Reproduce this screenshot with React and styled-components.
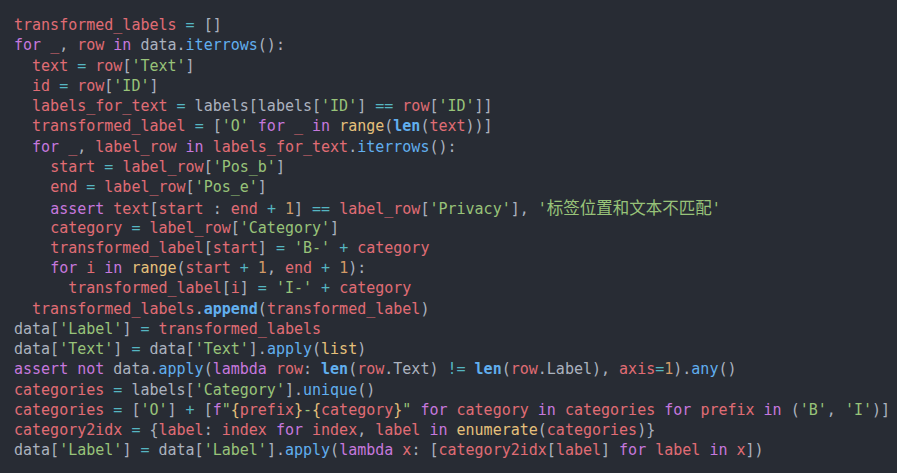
import styled, { createGlobalStyle } from 'styled-components'

const colors = {
  v: '#e06c75',
  k: '#c678dd',
  s: '#98c379',
  f: '#61afef',
  b: '#61afef',
  y: '#e5c07b',
  o: '#56b6c2',
  n: '#d19a66',
  p: '#abb2bf'
}

const source = [
  '«v transformed_labels» «o =» []',
  '«k for» «v _», «v row» «k in» data.«f iterrows»():',
  '  «v text» «o =» «v row»[«s \'Text\'»]',
  '  «v id» «o =» «v row»[«s \'ID\'»]',
  '  «v labels_for_text» «o =» labels[labels[«s \'ID\'»] «o ==» «v row»[«s \'ID\'»]]',
  '  «v transformed_label» «o =» [«s \'O\'» «k for» «v _» «k in» «y range»(«b len»(«v text»))]',
  '  «k for» «v _», «v label_row» «k in» «v labels_for_text».«f iterrows»():',
  '    «v start» «o =» «v label_row»[«s \'Pos_b\'»]',
  '    «v end» «o =» «v label_row»[«s \'Pos_e\'»]',
  '    «k assert» «v text»[«v start» : «v end» «o +» «n 1»] «o ==» «v label_row»[«s \'Privacy\'»], «s \'»«c 标签位置和文本不匹配»«s \'»',
  '    «v category» «o =» «v label_row»[«s \'Category\'»]',
  '    «v transformed_label»[«v start»] «o =» «s \'B-\'» «o +» «v category»',
  '    «k for» «v i» «k in» «y range»(«v start» «o +» «n 1», «v end» «o +» «n 1»):',
  '      «v transformed_label»[«v i»] «o =» «s \'I-\'» «o +» «v category»',
  '  «v transformed_labels».«b append»(«v transformed_label»)',
  'data[«s \'Label\'»] «o =» «v transformed_labels»',
  'data[«s \'Text\'»] «o =» data[«s \'Text\'»].«f apply»(«y list»)',
  '«k assert» «k not» data.«f apply»(«k lambda» «v row»: «b len»(«v row».Text) «o !=» «b len»(«v row».Label), «v axis»«o =»«n 1»).«f any»()',
  '«v categories» «o =» labels[«s \'Category\'»].«f unique»()',
  '«v categories» «o =» [«s \'O\'»] «o +» [«k f»«s "»«y {»«v prefix»«y }»«s -»«y {»«v category»«y }»«s "» «k for» «v category» «k in» «v categories» «k for» «v prefix» «k in» («s \'B\'», «s \'I\'»)]',
  '«v category2idx» «o =» {«v label»: «v index» «k for» «v index», «v label» «k in» «y enumerate»(«v categories»)}',
  'data[«s \'Label\'»] «o =» data[«s \'Label\'»].«f apply»(«k lambda» «v x»: [«v category2idx»[«v label»] «k for» «v label» «k in» «v x»])'
]

// split a marked line into [kind, text] tokens
const tokenize = line => {
  const out = []
  const re = /«(\w) ([^»]*)»/g
  let last = 0
  let m
  while ((m = re.exec(line))) {
    if (m.index > last) out.push(['p', line.slice(last, m.index)])
    out.push([m[1], m[2]])
    last = re.lastIndex
  }
  if (last < line.length) out.push(['p', line.slice(last)])
  return out
}

const GlobalStyle = createGlobalStyle`
  html, body {
    margin: 0;
    padding: 0;
    background: #282c34;
  }
`

const Editor = styled.div`
  width: 897px;
  height: 473px;
  box-sizing: border-box;
  padding: 15px 0 0 14px;
  background: #282c34;
  font-family: 'DejaVu Sans Mono', 'Liberation Mono', monospace;
  font-size: 15px;
  line-height: 20.25px;
  color: #abb2bf;
  overflow: hidden;
`

const Line = styled.div`
  white-space: pre;
  height: 20.25px;
`

const Token = styled.span`
  color: ${({ $kind }) => ($kind === 'c' ? colors.s : colors[$kind])};
  font-weight: ${({ $kind }) => ($kind === 'b' ? 700 : 400)};
  ${({ $kind }) =>
    $kind === 'c' &&
    `
    font-family: 'Noto Sans CJK SC', sans-serif;
    font-size: 16.5px;
    line-height: 20.25px;
  `}
`

export default function App () {
  return (
    <>
      <GlobalStyle />
      <Editor>
        {source.map((line, i) => (
          <Line key={i}>
            {tokenize(line).map(([kind, text], j) => (
              <Token key={j} $kind={kind}>{text}</Token>
            ))}
          </Line>
        ))}
      </Editor>
    </>
  )
}
